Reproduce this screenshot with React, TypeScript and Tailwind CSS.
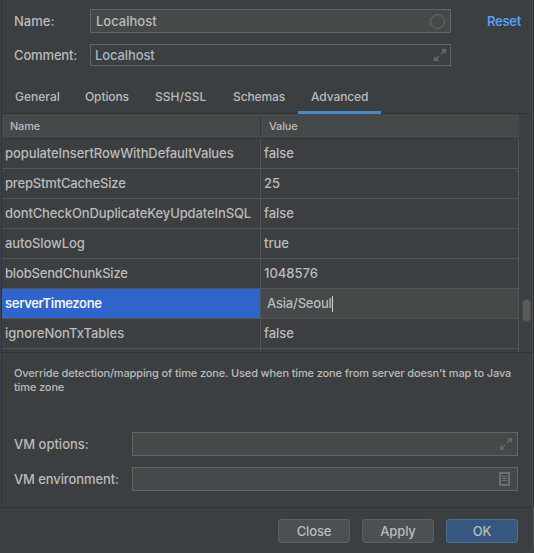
import React from "react";

const rows = [
  ["populateInsertRowWithDefaultValues", "false", "tracking-[-0.09px]"],
  ["prepStmtCacheSize", "25", "tracking-[-0.17px]"],
  ["dontCheckOnDuplicateKeyUpdateInSQL", "false", "tracking-[-0.11px]"],
  ["autoSlowLog", "true", "tracking-[-0.1px]"],
  ["blobSendChunkSize", "1048576", "tracking-[-0.17px]"],
  ["serverTimezone", "Asia/Seoul", "tracking-[-0.35px] font-semibold"],
  ["ignoreNonTxTables", "false", "tracking-normal"],
];

function ExpandIcon() {
  return (
    <svg width="12" height="12" viewBox="0 0 12 12" fill="#62686b" stroke="#62686b">
      <path d="M7 0H12v5zM0 7V12h5z" stroke="none" />
      <path d="M7 5L10 2M5 7L2 10" strokeWidth="1.4" fill="none" />
    </svg>
  );
}

function DocumentIcon() {
  return (
    <svg width="11" height="14" viewBox="0 0 11 14" fill="none" stroke="#667177">
      <rect x="1" y="1" width="9" height="12" strokeWidth="2" />
      <path d="M3 4.5h5M3 6.5h5M3 8.5h5" />
    </svg>
  );
}

function Row({ name, value, tracking }: { name: string; value: string; tracking: string }) {
  const selected = name === "serverTimezone";
  return (
    <div className="flex h-[30px] shrink-0">
      <div
        className={
          selected
            ? "w-[258px] border-b border-[#525557] bg-[#2f65ca] pl-[3px] leading-[29px] text-[#f0f2f5]"
            : "w-[258px] border-b border-[#525557] pl-[3px] leading-[29px]"
        }
      >
        <span className={tracking}>{name}</span>
      </div>
      <div
        className={
          selected
            ? "flex flex-1 items-center border-x border-b border-[#525557] bg-[#45494a] pt-px pl-[6px]"
            : "flex-1 border-x border-b border-[#525557] pl-[3px] leading-[29px]"
        }
      >
        <span className={selected ? "tracking-[-0.2px]" : ""}>{value}</span>
        {selected && <span className="h-4 w-px bg-[#d0d0d0]" />}
      </div>
    </div>
  );
}

export default function App() {
  return (
    <div className="flex h-[553px] w-[534px] flex-col overflow-hidden bg-[#3c3f41] font-['Inter',sans-serif] text-[13px] font-medium text-[#bbbbbb]">
      <div className="flex h-[507px] w-full shrink-0 border-r border-[#2a2c2d]">
        <div className="w-px bg-[#3c414c]" />
        <div className="flex w-[532px] flex-col border-x border-l-[#323435] border-r-[#515456]">
          <div className="flex h-[33px] pt-[9px] pl-3">
            <div className="w-[76px] leading-[24px]">Name:</div>
            <div className="flex h-6 w-[361px] items-center justify-between border border-[#646464] bg-[#45494a] pr-[5px] pl-[5px]">
              <span className="pt-px">Localhost</span>
              <span className="h-[15px] w-[15px] rounded-full border border-[#666b6e]" />
            </div>
            <div className="ml-[36px] leading-[24px] font-semibold tracking-[-0.3px] text-[#589df6]">Reset</div>
          </div>
          <div className="mt-[11px] flex h-[22px] pl-3">
            <div className="w-[76px] leading-[22px] tracking-[-0.15px]">Comment:</div>
            <div className="flex w-[361px] items-center justify-between border border-[#646464] pr-1 pl-[4px] text-[#a9b7c6]">
              <span className="pt-px tracking-[-0.1px]">Localhost</span>
              <ExpandIcon />
            </div>
          </div>
          <div className="mt-[14px] flex h-[34px] text-[12px] leading-[33px]">
            <div className="w-[83px] pl-[13px]">General</div>
            <div className="w-[70px] tracking-[-0.1px]">Options</div>
            <div className="w-[78px]">SSH/SSL</div>
            <div className="w-[65px] tracking-[-0.1px]">Schemas</div>
            <div className="h-[34px] w-[83px] border-b-[3px] border-[#4a88c7] pl-[13px] tracking-[-0.1px]">Advanced</div>
          </div>
          <div className="-mt-px flex h-[239px] flex-col overflow-hidden">
            <div className="flex h-px shrink-0">
              <div className="w-[296px] bg-[#323435]" />
              <div className="w-[83px] bg-[#4a88c7]" />
              <div className="flex-1 bg-[#323435]" />
            </div>
            <div className="flex h-[25px] w-[517px] shrink-0 border-b border-[#323435] bg-[#45494a] text-[11px] leading-[24px]">
              <div className="w-[258px] pl-2 tracking-[-0.2px]">Name</div>
              <div className="my-[2px] w-px bg-[#35383a]" />
              <div className="pl-2 tracking-[-0.15px]">Value</div>
            </div>
            <div className="flex min-h-0 flex-1">
              <div className="flex w-[517px] flex-col overflow-hidden">
                {rows.map(([name, value, tracking]) => (
                  <Row key={name} name={name} value={value} tracking={tracking} />
                ))}
                <Row name="" value="" tracking="" />
              </div>
              <div className="pt-[160px] pl-[3px]">
                <div className="h-[23px] w-[9px] rounded-full border border-[#4b4d4f] bg-[#595b5d]" />
              </div>
            </div>
          </div>
          <div className="h-[80px] border-t border-[#2f3233] pt-[13px] pl-3 text-[11px] leading-[14px] tracking-[-0.13px]">
            Override detection/mapping of time zone. Used when time zone from server doesn't map to Java
            <br />
            time zone
          </div>
          <div className="flex h-6 pl-3">
            <div className="w-[118px] leading-[24px]">VM options:</div>
            <div className="flex w-[386px] items-center justify-end border border-[#646464] bg-[#45494a] pr-[5px]">
              <ExpandIcon />
            </div>
          </div>
          <div className="mt-[11px] flex h-6 pl-3">
            <div className="w-[118px] leading-[24px] tracking-[-0.1px]">VM environment:</div>
            <div className="flex w-[386px] items-center justify-end border border-[#646464] bg-[#45494a] pr-[7px]">
              <DocumentIcon />
            </div>
          </div>
        </div>
      </div>
      <div className="flex flex-1 justify-end gap-3 rounded-br-lg border-t border-r border-t-[#323435] border-r-[#515456] pt-[11px] pr-[15px] text-center leading-[23px] tracking-[-0.15px]">
        <div className="h-6 w-[72px] rounded-[3px] border border-[#5e6060] bg-[#4c5052]">Close</div>
        <div className="h-6 w-[72px] rounded-[3px] border border-[#5e6060] bg-[#4c5052]">Apply</div>
        <div className="h-6 w-[72px] rounded-[3px] border border-[#4c708c] bg-[#365880]">OK</div>
      </div>
    </div>
  );
}
